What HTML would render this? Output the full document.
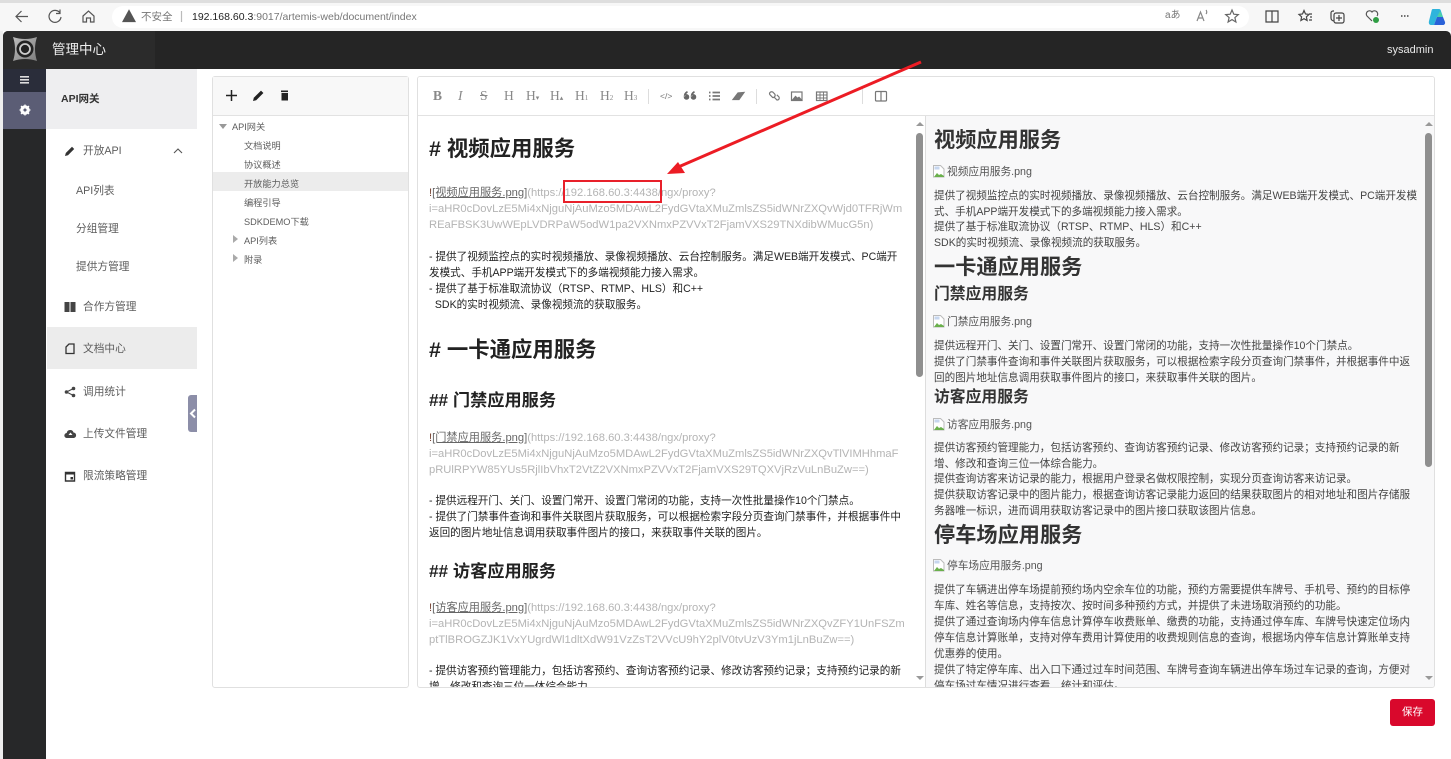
<!DOCTYPE html>
<html lang="zh"><head><meta charset="utf-8"><title>管理中心</title>
<style>
html,body{margin:0;padding:0;width:1451px;height:759px;overflow:hidden;background:#fff}
body{position:relative;font-family:"Liberation Sans","Noto Sans CJK SC",sans-serif;color:#333}
#w{position:absolute;left:0;top:0;width:1451px;height:759px;filter:blur(.3px)}
.a{position:absolute}
.t{position:absolute;white-space:nowrap;line-height:16px;transform:translateY(-8px)}
.nav{font-size:10.700px;color:#5c5c5c}
.tree{font-size:9.200px;color:#5c5c5c;line-height:12px;transform:translateY(-6px)}
.ed{font-size:10.580px;color:#222}
.g{font-size:11.200px;color:#b4b4b4}
.g b{font-weight:400;color:#666;text-decoration:underline}
.g i{font-style:normal;color:#743}
.h1{font-size:21.400px;font-weight:700;color:#222;line-height:26px;transform:translateY(-13px)}
.h2{font-size:17.200px;font-weight:700;color:#222;line-height:22px;transform:translateY(-11px)}
.pv{font-size:10.580px;color:#444}
.p1{font-size:21.200px;font-weight:700;color:#333;line-height:26px;transform:translateY(-13px)}
.p2{font-size:15.800px;font-weight:700;color:#333;line-height:22px;transform:translateY(-11px)}
.alt{font-size:10.700px;color:#555;padding-left:13px}
.alt svg{position:absolute;left:-1px;top:1px}
.tb{position:absolute;white-space:nowrap;line-height:16px;transform:translateY(-8px);font:13.500px/16px "Liberation Serif",serif;color:#888}
.tb span{font-size:7px}
svg{display:block}
</style></head><body><div id="w">
<!-- browser chrome -->
<div class="a" style="left:0;top:0;width:1451px;height:31px;background:#f7f7f7"></div>
<div class="a" style="left:0;top:0;width:1451px;height:3px;background:#dedede"></div>
<div class="a" style="left:112px;top:6px;width:1137px;height:22px;background:#fff;border-radius:11px"></div>
<svg class="a" style="left:0;top:0" width="1451" height="31" fill="none" stroke="#555" stroke-width="1.200">
<path d="M28 16.500H16M21.500 11L16 16.500L21.500 22"/>
<path d="M60 13a6 6 0 1 0 1 4M60 9.500v4h-4"/>
<path d="M83 16l5.500-5 5.500 5v6h-3.500v-4h-4v4H83z"/>
<path d="M129 10.500l-6 11h12z" fill="#555"/>
<path d="M181.500 11v11" stroke="#bbb"/>
<path d="M1197 21l3.500-9 3.500 9M1198.500 18h4M1206 10c1 1 1 3 0 4" stroke="#888"/>
<path d="M1232 10l1.800 4.200 4.500.4-3.400 3 1 4.400-3.900-2.400-3.900 2.400 1-4.400-3.400-3 4.500-.4z" stroke="#666"/>
<path d="M1266 11h12v11h-12zM1272 11v11" stroke="#444"/>
<path d="M1304 10.500l1.500 3.500 3.500.4-2.600 2.400.7 3.700-3.100-1.800-3.100 1.800.7-3.700-2.600-2.400 3.500-.4zM1309 14h3M1310 17h2M1309 20h3" stroke="#444"/>
<path d="M1334 11h-1a2 2 0 0 0-2 2v5a3 3 0 0 0 3 3M1336 13h6a2 2 0 0 1 2 2v6a2 2 0 0 1-2 2h-6a2 2 0 0 1-2-2v-6a2 2 0 0 1 2-2zM1339 15v6M1336 18h6" stroke="#444"/>
<path d="M1372 21l-5-5a3 3 0 0 1 5-4 3 3 0 0 1 5 4" stroke="#555"/>
<circle cx="1376" cy="20" r="3" fill="#2f9e44" stroke="none"/>
<path d="M1401 16h1.500M1404 16h1.500M1407 16h1.500" stroke="#444" stroke-width="1.600"/>
</svg>
<div class="t" style="left:141px;top:17px;font-size:10.500px;color:#777">不安全</div>
<div class="t" style="left:192px;top:17px;font-size:10.500px;color:#777"><span style="color:#222">192.168.60.3</span>:9017/artemis-web/document/index</div>
<div class="t" style="left:1165px;top:16px;font-size:10px;color:#777">aあ</div>
<svg class="a" style="left:1428px;top:8px" width="18" height="18"><path d="M5 1h6c1 0 1.500.6 1.800 1.500L15 9H9L6 17H3C1 17 .5 15 1 13L3.500 3C3.800 1.800 4 1 5 1z" fill="#2fb4dc"/><path d="M9 9h6l2 5c.5 2-1 3-2 3H6z" fill="#2a62d8"/><path d="M12 3l3 6H9z" fill="#4bd0a8"/></svg>

<!-- header -->
<div class="a" style="left:3px;top:31px;width:1448px;height:38px;background:#252525;border-radius:5px 5px 0 0"></div>
<div class="a" style="left:3px;top:31px;width:152px;height:38px;background:#2b2b2b;border-radius:5px 0 0 0"></div>
<svg class="a" style="left:13px;top:37px" width="24" height="24"><defs><linearGradient id="lg" x1="0" y1="0" x2="1" y2="1"><stop offset="0" stop-color="#bdbdbd"/><stop offset="1" stop-color="#7d7d7d"/></linearGradient></defs><path d="M0 0Q12 4 24 0Q20 12 24 24Q12 20 0 24Q4 12 0 0z" fill="url(#lg)"/><circle cx="12" cy="12" r="8.500" fill="#222"/><circle cx="12" cy="12" r="5" fill="none" stroke="#ccc" stroke-width="1.800"/></svg>
<div class="t" style="left:52px;top:50px;font-size:13.500px;color:#eee">管理中心</div>
<div class="t" style="left:1387px;top:50px;font-size:11px;color:#e8e8e8">sysadmin</div>

<!-- rail -->
<div class="a" style="left:0;top:31px;width:3px;height:728px;background:#eee"></div>
<div class="a" style="left:3px;top:69px;width:43px;height:690px;background:#272829"></div>
<div class="a" style="left:3px;top:69px;width:43px;height:23px;background:#2a2d3a"></div>
<div class="a" style="left:3px;top:92px;width:43px;height:37px;background:#5b5d75"></div>
<svg class="a" style="left:19px;top:75px" width="12" height="10" fill="#ddd"><rect x="1" y="1" width="9" height="1.600"/><rect x="1" y="4" width="9" height="1.600"/><rect x="1" y="7" width="9" height="1.600"/></svg>
<svg class="a" style="left:19px;top:104px" width="12" height="12"><circle cx="6" cy="6" r="3.500" fill="none" stroke="#fff" stroke-width="2.500"/><path d="M6 .5v11M.5 6h11M2 2l8 8M10 2l-8 8" stroke="#fff" stroke-width="1.300"/><circle cx="6" cy="6" r="1.500" fill="#5b5d75"/></svg>

<!-- sidebar -->
<div class="a" style="left:46px;top:69px;width:151px;height:60px;background:#eeeef0"></div>
<div class="t" style="left:61px;top:99px;font-size:10.500px;font-weight:700;color:#333">API网关</div>
<div class="a" style="left:47px;top:327px;width:150px;height:42px;background:#ececec"></div>
<svg class="a" style="left:64px;top:145px" width="12" height="12"><path d="M1 11l.8-3L8 1.800 10.200 4 4 10.200z" fill="#333"/></svg>
<svg class="a" style="left:172px;top:147px" width="12" height="8" fill="none" stroke="#555" stroke-width="1.100"><path d="M2 6l4-4 4 4"/></svg>
<svg class="a" style="left:64px;top:301px" width="12" height="12" fill="#444"><rect x=".5" y="1" width="5" height="10"/><rect x="6.500" y="1" width="5" height="10"/></svg>
<svg class="a" style="left:64px;top:342px" width="12" height="13" fill="none" stroke="#333" stroke-width="1.300"><path d="M2 5l3-3h5v9.500H2z"/></svg>
<svg class="a" style="left:64px;top:386px" width="12" height="12" fill="#444"><circle cx="2.500" cy="6" r="1.800"/><circle cx="9.500" cy="2.500" r="1.800"/><circle cx="9.500" cy="9.500" r="1.800"/><path d="M2.500 6l7-3.500M2.500 6l7 3.500" stroke="#444"/></svg>
<svg class="a" style="left:64px;top:428px" width="13" height="12" fill="#444"><path d="M3 10a2.500 2.500 0 0 1-.3-5A3.500 3.500 0 0 1 9.500 4.500 2.800 2.800 0 0 1 10 10z"/><path d="M6.500 4.500l2 2.500h-4z" fill="#fff"/></svg>
<svg class="a" style="left:64px;top:470px" width="12" height="12"><path d="M1.500 2.500h9v8.500h-9z" fill="none" stroke="#333" stroke-width="1.400"/><path d="M1.500 2.500h9v2h-9z" fill="#333"/><rect x="6.500" y="7" width="2.500" height="2.500" fill="#333"/></svg>
<div class="t nav" style="left:83px;top:151px">开放API</div>
<div class="t nav" style="left:76px;top:191px">API列表</div>
<div class="t nav" style="left:76px;top:229px">分组管理</div>
<div class="t nav" style="left:76px;top:267px">提供方管理</div>
<div class="t nav" style="left:83px;top:307px">合作方管理</div>
<div class="t nav" style="left:83px;top:349px">文档中心</div>
<div class="t nav" style="left:83px;top:392px">调用统计</div>
<div class="t nav" style="left:83px;top:434px">上传文件管理</div>
<div class="t nav" style="left:83px;top:476px">限流策略管理</div>
<div class="a" style="left:188px;top:395px;width:9px;height:37px;background:#8c8ea8;border-radius:3px 0 0 3px"></div>
<svg class="a" style="left:189px;top:408px" width="8" height="11" fill="none" stroke="#fff" stroke-width="2"><path d="M6 1.500L2 5.500l4 4"/></svg>

<!-- tree panel -->
<div class="a" style="left:212px;top:76px;width:195px;height:610px;border:1px solid #e0e0e0;border-radius:3px;background:#fff"></div>
<div class="a" style="left:213px;top:77px;width:195px;height:38px;background:#f8f8f8;border-bottom:1px solid #e2e2e2"></div>
<svg class="a" style="left:225px;top:89px" width="13" height="13" stroke="#222" stroke-width="1.500"><path d="M6.500 1v11M1 6.500h11"/></svg>
<svg class="a" style="left:252px;top:89px" width="13" height="13"><path d="M1 12l.8-3.200L9 1.600 11.400 4 4.200 11.200z" fill="#222"/></svg>
<svg class="a" style="left:279px;top:89px" width="12" height="13" fill="#222"><rect x="2" y="1.500" width="7" height="1.600"/><path d="M2.500 4h6.500v7.500H2.500z"/></svg>
<div class="a" style="left:213px;top:172px;width:195px;height:19px;background:#ececec"></div>
<svg class="a" style="left:219px;top:123px" width="9" height="8" fill="#999"><path d="M0 1h8L4 6z"/></svg>
<svg class="a" style="left:232px;top:235px" width="7" height="9" fill="#aaa"><path d="M1 0v8l5-4z"/></svg>
<svg class="a" style="left:232px;top:254px" width="7" height="9" fill="#aaa"><path d="M1 0v8l5-4z"/></svg>
<div class="t tree" style="left:232px;top:127px">API网关</div>
<div class="t tree" style="left:244px;top:146px">文档说明</div>
<div class="t tree" style="left:244px;top:165px">协议概述</div>
<div class="t tree" style="left:244px;top:184px">开放能力总览</div>
<div class="t tree" style="left:244px;top:203px">编程引导</div>
<div class="t tree" style="left:244px;top:222px">SDKDEMO下载</div>
<div class="t tree" style="left:244px;top:241px">API列表</div>
<div class="t tree" style="left:244px;top:260px">附录</div>

<!-- editor panel -->
<div class="a" style="left:417px;top:76px;width:1016px;height:610px;border:1px solid #e0e0e0;border-radius:3px;background:#fff;overflow:hidden">
<div class="a" style="left:0;top:0;width:1016px;height:38px;border-bottom:1px solid #e2e2e2;background:#fff"></div>
<div class="a" style="left:507px;top:39px;width:510px;height:571px;background:#f8f8f9;border-left:1px solid #ddd"></div>
<div class="a" style="left:-418px;top:-77px;width:1451px;height:759px">
<!-- toolbar -->
<div class="tb" style="left:433px;top:96px;font-weight:700">B</div>
<div class="tb" style="left:458px;top:96px;font-style:italic">I</div>
<div class="tb" style="left:480px;top:96px;text-decoration:line-through">S</div>
<div class="tb" style="left:504px;top:96px">H</div>
<div class="tb" style="left:526px;top:96px">H<span>▾</span></div>
<div class="tb" style="left:550px;top:96px">H<span>▴</span></div>
<div class="tb" style="left:575px;top:96px">H<span>1</span></div>
<div class="tb" style="left:600px;top:96px">H<span>2</span></div>
<div class="tb" style="left:624px;top:96px">H<span>3</span></div>
<div class="a" style="left:648px;top:89px;width:1px;height:15px;background:#ddd"></div>
<div class="t" style="left:660px;top:96px;font-size:8.500px;color:#777">&lt;/&gt;</div>
<div class="a" style="left:756px;top:89px;width:1px;height:15px;background:#ddd"></div>
<div class="a" style="left:862px;top:89px;width:1px;height:15px;background:#ddd"></div>
<svg class="a" style="left:0;top:0" width="940" height="116" fill="none" stroke="#777" stroke-width="1.200">
<path d="M684 97a2.500 2.500 0 1 0 0-.1c0-3 1-4.500 3-5.500l.5 1c-1.500 1-2 2-2 3.500M691 97a2.500 2.500 0 1 0 0-.1c0-3 1-4.500 3-5.500l.5 1c-1.500 1-2 2-2 3.500" fill="#666" stroke="#666" stroke-width=".6"/>
<path d="M709 92.500h1.500M709 96h1.500M709 99.500h1.500M712.500 92.500h7.500M712.500 96h7.500M712.500 99.500h7.500" stroke-width="1.700"/>
<path d="M733 99.500l5-6.500 6-.5-5 7z" fill="#777"/>
<path d="M769.500 93.500a2.200 2.200 0 0 1 3.200-1.500l2 2a2.200 2.200 0 0 1-2 3.500l-2.500-2.500a2 2 0 0 1-.7-1.500zM774 97l3 3a2 2 0 0 0 2-3l-2.200-2.200"/>
<rect x="791.500" y="92" width="10.500" height="8.500"/><path d="M792.500 100l3-3.500 2 1.800 1.500-1 2.500 2.700z" fill="#777"/>
<rect x="816.500" y="92" width="10.500" height="8.500"/><path d="M816.500 95h10.500M816.500 98h10.500M820 92v8.500M823.500 92v8.500" stroke-width=".9"/>
<rect x="875.500" y="91.500" width="11" height="9.500" rx="1"/><path d="M881 91.500v9.500"/>
</svg>

<div class="a" style="left:1px;top:1px;width:1451px;height:759px">
<!-- editor content -->
<div class="t h1" style="left:428px;top:148px"># 视频应用服务</div>
<div class="t g" style="left:428px;top:192px"><i>!</i><b>[视频应用服务.png]</b>(https://192.168.60.3:4438/ngx/proxy?</div>
<div class="t g" style="left:428px;top:208px">i=aHR0cDovLzE5Mi4xNjguNjAuMzo5MDAwL2FydGVtaXMuZmlsZS5idWNrZXQvWjd0TFRjWm</div>
<div class="t g" style="left:428px;top:224px">REaFBSK3UwWEpLVDRPaW5odW1pa2VXNmxPZVVxT2FjamVXS29TNXdibWMucG5n)</div>
<div class="t ed" style="left:428px;top:256px">- 提供了视频监控点的实时视频播放、录像视频播放、云台控制服务。满足WEB端开发模式、PC端开</div>
<div class="t ed" style="left:428px;top:272px">发模式、手机APP端开发模式下的多端视频能力接入需求。</div>
<div class="t ed" style="left:428px;top:288px">- 提供了基于标准取流协议（RTSP、RTMP、HLS）和C++</div>
<div class="t ed" style="left:428px;top:304px">&nbsp; SDK的实时视频流、录像视频流的获取服务。</div>
<div class="t h1" style="left:428px;top:349px"># 一卡通应用服务</div>
<div class="t h2" style="left:428px;top:399px">## 门禁应用服务</div>
<div class="t g" style="left:428px;top:437px"><i>!</i><b>[门禁应用服务.png]</b>(https://192.168.60.3:4438/ngx/proxy?</div>
<div class="t g" style="left:428px;top:453px">i=aHR0cDovLzE5Mi4xNjguNjAuMzo5MDAwL2FydGVtaXMuZmlsZS5idWNrZXQvTlVIMHhmaF</div>
<div class="t g" style="left:428px;top:469px">pRUlRPYW85YUs5RjlIbVhxT2VtZ2VXNmxPZVVxT2FjamVXS29TQXVjRzVuLnBuZw==)</div>
<div class="t ed" style="left:428px;top:500px">- 提供远程开门、关门、设置门常开、设置门常闭的功能，支持一次性批量操作10个门禁点。</div>
<div class="t ed" style="left:428px;top:516px">- 提供了门禁事件查询和事件关联图片获取服务，可以根据检索字段分页查询门禁事件，并根据事件中</div>
<div class="t ed" style="left:428px;top:532px">返回的图片地址信息调用获取事件图片的接口，来获取事件关联的图片。</div>
<div class="t h2" style="left:428px;top:570px">## 访客应用服务</div>
<div class="t g" style="left:428px;top:607px"><i>!</i><b>[访客应用服务.png]</b>(https://192.168.60.3:4438/ngx/proxy?</div>
<div class="t g" style="left:428px;top:623px">i=aHR0cDovLzE5Mi4xNjguNjAuMzo5MDAwL2FydGVtaXMuZmlsZS5idWNrZXQvZFY1UnFSZm</div>
<div class="t g" style="left:428px;top:639px">ptTlBROGZJK1VxYUgrdWl1dltXdW91VzZsT2VVcU9hY2plV0tvUzV3Ym1jLnBuZw==)</div>
<div class="t ed" style="left:428px;top:670px">- 提供访客预约管理能力，包括访客预约、查询访客预约记录、修改访客预约记录；支持预约记录的新</div>
<div class="t ed" style="left:428px;top:686px">增、修改和查询三位一体综合能力。</div>

<!-- preview -->
<div class="t p1" style="left:933px;top:140px">视频应用服务</div>
<div class="t alt" style="left:933px;top:171px"><svg width="12" height="13"><path d="M.5.5h7l3.500 3.500v8H.5z" fill="#fff" stroke="#bbb"/><path d="M1 12l3-4 2 2 2-1 3 2v1z" fill="#6ab04c"/><path d="M1.500 1.500h5v3h-5z" fill="#c6d6ef"/></svg>视频应用服务.png</div>
<div class="t pv" style="left:933px;top:195px">提供了视频监控点的实时视频播放、录像视频播放、云台控制服务。满足WEB端开发模式、PC端开发模</div>
<div class="t pv" style="left:933px;top:211px">式、手机APP端开发模式下的多端视频能力接入需求。</div>
<div class="t pv" style="left:933px;top:226px">提供了基于标准取流协议（RTSP、RTMP、HLS）和C++</div>
<div class="t pv" style="left:933px;top:242px">SDK的实时视频流、录像视频流的获取服务。</div>
<div class="t p1" style="left:933px;top:267px">一卡通应用服务</div>
<div class="t p2" style="left:933px;top:294px">门禁应用服务</div>
<div class="t alt" style="left:933px;top:321px"><svg width="12" height="13"><path d="M.5.5h7l3.500 3.500v8H.5z" fill="#fff" stroke="#bbb"/><path d="M1 12l3-4 2 2 2-1 3 2v1z" fill="#6ab04c"/><path d="M1.500 1.500h5v3h-5z" fill="#c6d6ef"/></svg>门禁应用服务.png</div>
<div class="t pv" style="left:933px;top:345px">提供远程开门、关门、设置门常开、设置门常闭的功能，支持一次性批量操作10个门禁点。</div>
<div class="t pv" style="left:933px;top:361px">提供了门禁事件查询和事件关联图片获取服务，可以根据检索字段分页查询门禁事件，并根据事件中返</div>
<div class="t pv" style="left:933px;top:377px">回的图片地址信息调用获取事件图片的接口，来获取事件关联的图片。</div>
<div class="t p2" style="left:933px;top:397px">访客应用服务</div>
<div class="t alt" style="left:933px;top:424px"><svg width="12" height="13"><path d="M.5.5h7l3.500 3.500v8H.5z" fill="#fff" stroke="#bbb"/><path d="M1 12l3-4 2 2 2-1 3 2v1z" fill="#6ab04c"/><path d="M1.500 1.500h5v3h-5z" fill="#c6d6ef"/></svg>访客应用服务.png</div>
<div class="t pv" style="left:933px;top:447px">提供访客预约管理能力，包括访客预约、查询访客预约记录、修改访客预约记录；支持预约记录的新</div>
<div class="t pv" style="left:933px;top:463px">增、修改和查询三位一体综合能力。</div>
<div class="t pv" style="left:933px;top:478px">提供查询访客来访记录的能力，根据用户登录名做权限控制，实现分页查询访客来访记录。</div>
<div class="t pv" style="left:933px;top:494px">提供获取访客记录中的图片能力，根据查询访客记录能力返回的结果获取图片的相对地址和图片存储服</div>
<div class="t pv" style="left:933px;top:510px">务器唯一标识，进而调用获取访客记录中的图片接口获取该图片信息。</div>
<div class="t p1" style="left:933px;top:535px">停车场应用服务</div>
<div class="t alt" style="left:933px;top:565px"><svg width="12" height="13"><path d="M.5.5h7l3.500 3.500v8H.5z" fill="#fff" stroke="#bbb"/><path d="M1 12l3-4 2 2 2-1 3 2v1z" fill="#6ab04c"/><path d="M1.500 1.500h5v3h-5z" fill="#c6d6ef"/></svg>停车场应用服务.png</div>
<div class="t pv" style="left:933px;top:589px">提供了车辆进出停车场提前预约场内空余车位的功能，预约方需要提供车牌号、手机号、预约的目标停</div>
<div class="t pv" style="left:933px;top:605px">车库、姓名等信息，支持按次、按时间多种预约方式，并提供了未进场取消预约的功能。</div>
<div class="t pv" style="left:933px;top:621px">提供了通过查询场内停车信息计算停车收费账单、缴费的功能，支持通过停车库、车牌号快速定位场内</div>
<div class="t pv" style="left:933px;top:637px">停车信息计算账单，支持对停车费用计算使用的收费规则信息的查询，根据场内停车信息计算账单支持</div>
<div class="t pv" style="left:933px;top:653px">优惠券的使用。</div>
<div class="t pv" style="left:933px;top:669px">提供了特定停车库、出入口下通过过车时间范围、车牌号查询车辆进出停车场过车记录的查询，方便对</div>
<div class="t pv" style="left:933px;top:685px">停车场过车情况进行查看、统计和评估。</div>
</div>

<!-- scrollbars -->
<div class="a" style="left:916px;top:133px;width:7px;height:244px;background:#8f8f8f;border-radius:4px"></div>
<div class="a" style="left:1425px;top:133px;width:7px;height:334px;background:#8f8f8f;border-radius:4px"></div>
<svg class="a" style="left:915px;top:120px" width="10" height="8" fill="#999"><path d="M1 6l4-4 4 4z"/></svg>
<svg class="a" style="left:915px;top:674px" width="10" height="8" fill="#999"><path d="M1 2l4 4 4-4z"/></svg>
<svg class="a" style="left:1424px;top:120px" width="10" height="8" fill="#999"><path d="M1 6l4-4 4 4z"/></svg>
<svg class="a" style="left:1424px;top:674px" width="10" height="8" fill="#999"><path d="M1 2l4 4 4-4z"/></svg>
</div>
</div>

<!-- save -->
<div class="a" style="left:1390px;top:699px;width:45px;height:27px;background:#d9082c;border-radius:3px;color:#fff;font-size:10.500px;line-height:27px;text-align:center">保存</div>

<!-- annotation -->
<div class="a" style="left:563px;top:180px;width:95px;height:19px;border:2px solid #e8202a"></div>
<svg class="a" style="left:0;top:0" width="1451" height="759"><path d="M921 62L676 168" stroke="#ec1c24" stroke-width="3"/><path d="M667 174l11-12 7 11z" fill="#ec1c24"/></svg>
</div></body></html>
